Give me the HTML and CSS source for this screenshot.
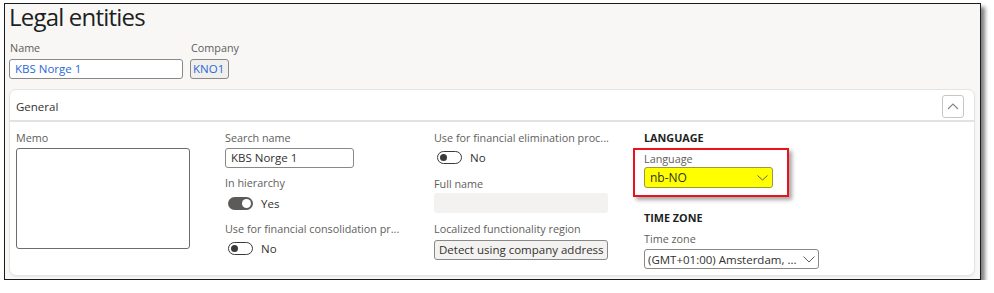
FILE: index.html
```html
<!DOCTYPE html>
<html lang="en">
<head>
<meta charset="utf-8">
<title>Legal entities</title>
<link rel="stylesheet" href="styles.css">
</head>
<body>
<div class="window">
  <h1 class="title">Legal entities</h1>
  <div class="top-fields">
    <div class="field">
      <div class="label">Name</div>
      <div class="input name-input blue">KBS Norge 1</div>
    </div>
    <div class="field">
      <div class="label company-label">Company</div>
      <div class="input company-input blue readonly">KNO1</div>
    </div>
  </div>

  <section class="card">
    <header class="card-head">
      <span class="card-title">General</span>
      <button class="collapse" type="button" aria-label="Collapse">
        <svg width="12" height="8" viewBox="0 0 12 8"><path d="M1 7 L6 2 L11 7" fill="none" stroke="#8a8886" stroke-width="1.2"/></svg>
      </button>
    </header>
    <div class="card-body">
      <div class="col">
        <div class="label">Memo</div>
        <div class="memo"></div>
      </div>

      <div class="col">
        <div class="label">Search name</div>
        <div class="input search-input">KBS Norge 1</div>
        <div class="label gap-8">In hierarchy</div>
        <div class="toggle-row gap-6">
          <span class="toggle on"><span class="thumb"></span></span>
          <span class="toggle-text">Yes</span>
        </div>
        <div class="label gap-12">Use for financial consolidation pr...</div>
        <div class="toggle-row gap-5">
          <span class="toggle off"><span class="thumb"></span></span>
          <span class="toggle-text">No</span>
        </div>
      </div>

      <div class="col">
        <div class="label">Use for financial elimination proc...</div>
        <div class="toggle-row gap-5">
          <span class="toggle off"><span class="thumb"></span></span>
          <span class="toggle-text">No</span>
        </div>
        <div class="label gap-13">Full name</div>
        <div class="input fullname-input"></div>
        <div class="label gap-9">Localized functionality region</div>
        <div class="detect-btn">Detect using company address</div>
      </div>

      <div class="col">
        <div class="heading">LANGUAGE</div>
        <div class="highlight">
          <div class="label">Language</div>
          <div class="select lang-select">
            <span>nb-NO</span>
            <svg width="11" height="6" viewBox="0 0 11 6"><path d="M0.5 0.5 L5.5 5 L10.5 0.5" fill="none" stroke="#605e5c" stroke-width="1"/></svg>
          </div>
        </div>
        <div class="heading tz-heading">TIME ZONE</div>
        <div class="label gap-7">Time zone</div>
        <div class="select tz-select">
          <span>(GMT+01:00) Amsterdam, ...</span>
          <svg width="12" height="7" viewBox="0 0 12 7"><path d="M0.5 0.5 L6 6 L11.5 0.5" fill="none" stroke="#605e5c" stroke-width="1"/></svg>
        </div>
      </div>
    </div>
  </section>
</div>
</body>
</html>
```
FILE: styles.css
```css
* { box-sizing: border-box; }

html, body {
  margin: 0;
  padding: 0;
  background: #ffffff;
}

body {
  font-family: "Open Sans", "Noto Sans", Arial, sans-serif;
  color: #323130;
}

.window {
  margin: 3px 0 0 4px;
  width: 977px;
  height: 277px;
  border: 1px solid #1b1b1b;
  background: #f8f7f6;
  padding: 1px 5px 0 4px;
  box-shadow: 4px 4px 4px rgba(0, 0, 0, 0.5);
}

.title {
  margin: 0;
  font-size: 24px;
  font-weight: 500;
  line-height: 24px;
  letter-spacing: -0.8px;
  color: #201f1e;
}

.top-fields {
  display: flex;
  gap: 7px;
  margin-top: 12px;
}

.field {
  display: flex;
  flex-direction: column;
}

.label {
  font-size: 10.8px;
  line-height: 14px;
  height: 14px;
  color: #605e5c;
  white-space: nowrap;
}

.top-fields .label { padding-left: 1px; }

.input {
  height: 20px;
  border: 1px solid #8a8886;
  border-radius: 3px;
  background: #ffffff;
  font-size: 11.5px;
  line-height: 18px;
  padding: 0 5px;
  white-space: nowrap;
  color: #323130;
}

.top-fields .input { margin-top: 4px; }

.blue { color: #2a6ad8; }

.name-input { width: 174px; }

.company-input {
  width: 39px;
  padding: 0 2px;
}

.readonly { background: #f0efee; }

.card {
  margin-top: 10px;
  width: 966px;
  background: #ffffff;
  border: 1px solid #e6e4e2;
  border-radius: 7px;
  box-shadow: 0 1px 2px rgba(0, 0, 0, 0.06);
}

.card-head {
  height: 32px;
  padding: 2px 10px 0 6px;
  border-bottom: 2px solid #e4e2e0;
  display: flex;
  align-items: center;
  justify-content: space-between;
}

.card-title {
  font-size: 11.5px;
  color: #323130;
}

.collapse {
  width: 22px;
  height: 23px;
  padding: 0;
  border: 1px solid #c8c6c4;
  border-radius: 3px;
  background: #ffffff;
  display: flex;
  align-items: center;
  justify-content: center;
}

.card-body {
  display: grid;
  grid-template-columns: 209px 209px 210px 1fr;
  padding: 9px 6px 6px 6px;
}

.col {
  display: flex;
  flex-direction: column;
  align-items: flex-start;
}

.memo {
  margin-top: 3px;
  width: 174px;
  height: 101px;
  border: 1px solid #6e6c6a;
  border-radius: 3px;
  background: #ffffff;
}

.search-input {
  margin-top: 3px;
  width: 129px;
}

.gap-5 { margin-top: 5px; }
.gap-6 { margin-top: 6px; }
.gap-7 { margin-top: 7px; }
.gap-8 { margin-top: 8px; }
.gap-9 { margin-top: 9px; }
.gap-12 { margin-top: 12px; }
.gap-13 { margin-top: 13px; }

.toggle-row {
  height: 14px;
  display: flex;
  align-items: center;
  gap: 8px;
  padding-left: 3px;
}

.toggle {
  width: 25px;
  height: 13px;
  border-radius: 7px;
  display: flex;
  align-items: center;
}

.toggle.on {
  background: #5c5b5a;
  justify-content: flex-end;
  padding-right: 2px;
}

.toggle.on .thumb {
  width: 9px;
  height: 9px;
  border-radius: 50%;
  background: #ffffff;
}

.toggle.off {
  background: #ffffff;
  border: 1px solid #3b3a39;
  justify-content: flex-start;
  padding-left: 2px;
}

.toggle.off .thumb {
  width: 7px;
  height: 7px;
  border-radius: 50%;
  background: #3b3a39;
}

.toggle-text {
  font-size: 11.5px;
  color: #323130;
}

.fullname-input {
  margin-top: 2px;
  width: 174px;
  border: none;
  background: #f3f2f1;
}

.detect-btn {
  margin-top: 4px;
  width: 174px;
  height: 20px;
  border: 1px solid #8a8886;
  border-radius: 3px;
  background: #f3f2f1;
  font-size: 11.5px;
  line-height: 18px;
  padding: 0 4px;
  white-space: nowrap;
  color: #323130;
}

.heading {
  font-size: 10.8px;
  font-weight: 700;
  line-height: 14px;
  height: 14px;
  color: #201f1e;
}

.highlight {
  margin-top: 3px;
  margin-left: -11px;
  width: 156px;
  height: 49px;
  border: 2px solid #e8141c;
  padding: 2px 0 0 9px;
  box-shadow: 3px 3px 4px rgba(0, 0, 0, 0.35);
}

.select {
  height: 21px;
  border: 1px solid #8a8886;
  border-radius: 3px;
  display: flex;
  align-items: center;
  justify-content: space-between;
  font-size: 11.5px;
  padding: 0 4px 0 5px;
  white-space: nowrap;
  color: #323130;
}

.lang-select {
  margin-top: 1px;
  width: 129px;
  background: #ffff00;
  border-color: #9a9a3a;
  font-size: 12px;
}

.tz-heading { margin-top: 14px; }

.tz-select {
  margin-top: 3px;
  width: 175px;
  height: 20px;
  background: #ffffff;
  padding: 0 3px 0 3px;
}
```
